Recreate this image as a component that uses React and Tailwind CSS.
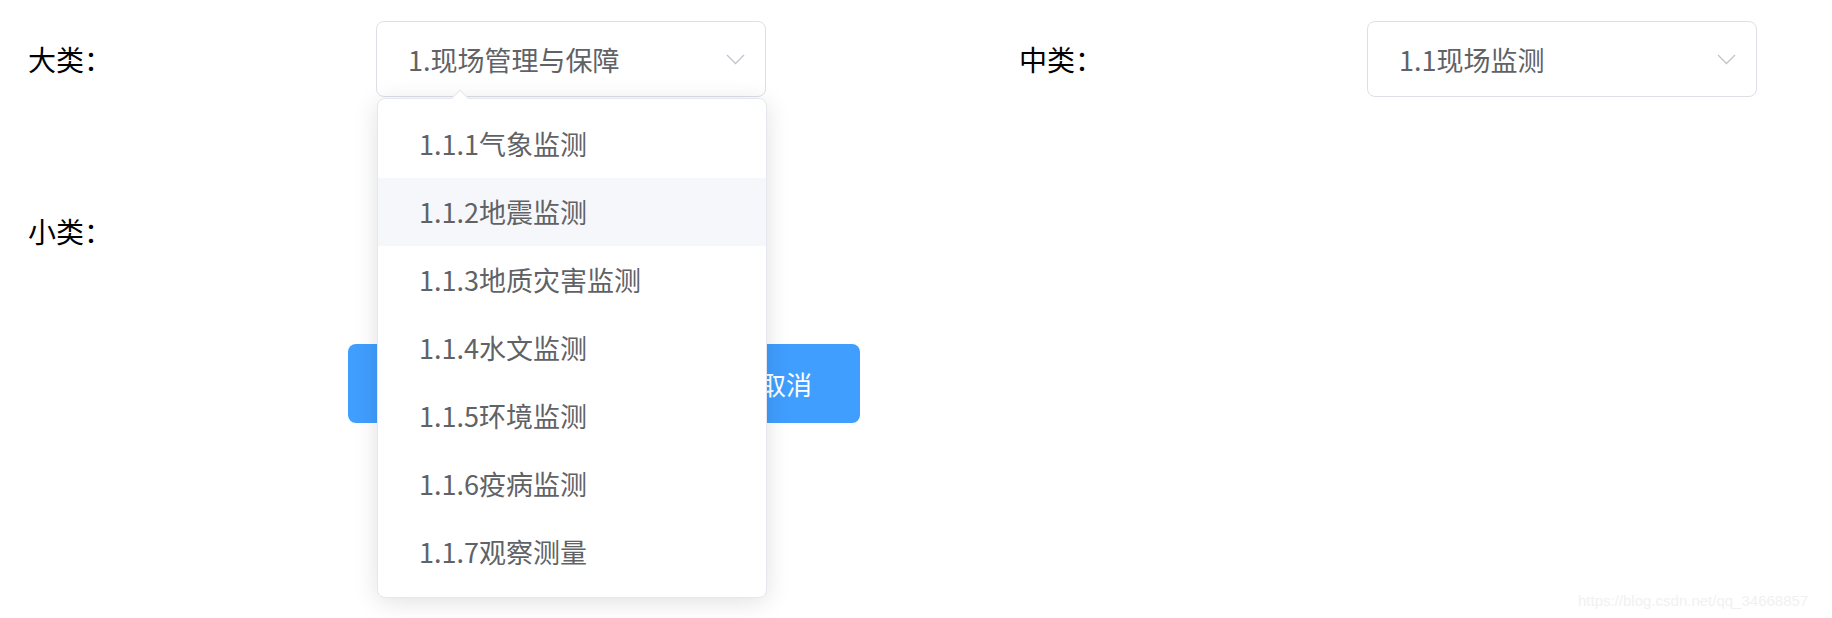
import React from "react";

const Chevron = () => (
  <svg width="19" height="11" viewBox="0 0 19 11" fill="none" className="shrink-0">
    <polyline points="1,1 9.5,9.5 18,1" stroke="#c0c4cc" strokeWidth="1.3" fill="none" />
  </svg>
);

const Select = ({ value }) => (
  <div className="w-[390px] h-[76px] border border-[#dcdfe6] rounded-[8px] bg-white flex items-center justify-between pl-[31px] pr-[20px]">
    <span className="text-[27px] text-[#606266] leading-none">{value}</span>
    <Chevron />
  </div>
);

const Field = ({ label, value, showSelect = true }) => (
  <div className="flex items-center h-[76px]">
    <div className="w-[376px] pl-[28px] text-[28px] text-black leading-none">{label}</div>
    {showSelect ? <Select value={value} /> : null}
  </div>
);

const items = [
  "1.1.1气象监测",
  "1.1.2地震监测",
  "1.1.3地质灾害监测",
  "1.1.4水文监测",
  "1.1.5环境监测",
  "1.1.6疫病监测",
  "1.1.7观察测量",
];

export default function App() {
  return (
    <div className="relative w-[1832px] h-[618px] bg-white overflow-hidden font-['Noto_Sans_CJK_SC','Noto_Sans',sans-serif]">
      <div className="grid grid-cols-[991px_1fr] pt-[21px] gap-y-[96px]">
        <Field label="大类：" value="1.现场管理与保障" />
        <Field label="中类：" value="1.1现场监测" />
        <Field label="小类：" value="" showSelect={false} />
        <div />
      </div>

      <div className="flex pl-[348px] gap-[216px] mt-[75px]">
        <button className="w-[148px] h-[79px] rounded-[8px] bg-[#409eff] text-white text-[26px]">确定</button>
        <button className="w-[148px] h-[79px] rounded-[8px] bg-[#409eff] text-white text-[26px]">取消</button>
      </div>

      {/* dropdown */}
      <div className="absolute left-[377px] top-[98px] w-[390px] h-[500px] bg-white border border-[#e4e7ed] rounded-[8px] shadow-[0_4px_24px_rgba(0,0,0,0.12)] py-[11px]">
        <div className="absolute left-[76px] -top-[7px] w-[12px] h-[12px] bg-white border-t border-l border-[#e4e7ed] rotate-45" />
        {items.map((t, i) => (
          <div
            key={t}
            className={
              i === 1
                ? "h-[68px] flex items-center pl-[41px] text-[27px] text-[#606266] bg-[#f5f7fa]"
                : "h-[68px] flex items-center pl-[41px] text-[27px] text-[#606266]"
            }
          >
            {t}
          </div>
        ))}
      </div>

      <div className="absolute left-[1578px] top-[590px] text-[15px] text-[#f1f1f1] font-['Liberation_Sans',sans-serif]">
        https://blog.csdn.net/qq_34668857
      </div>
    </div>
  );
}
